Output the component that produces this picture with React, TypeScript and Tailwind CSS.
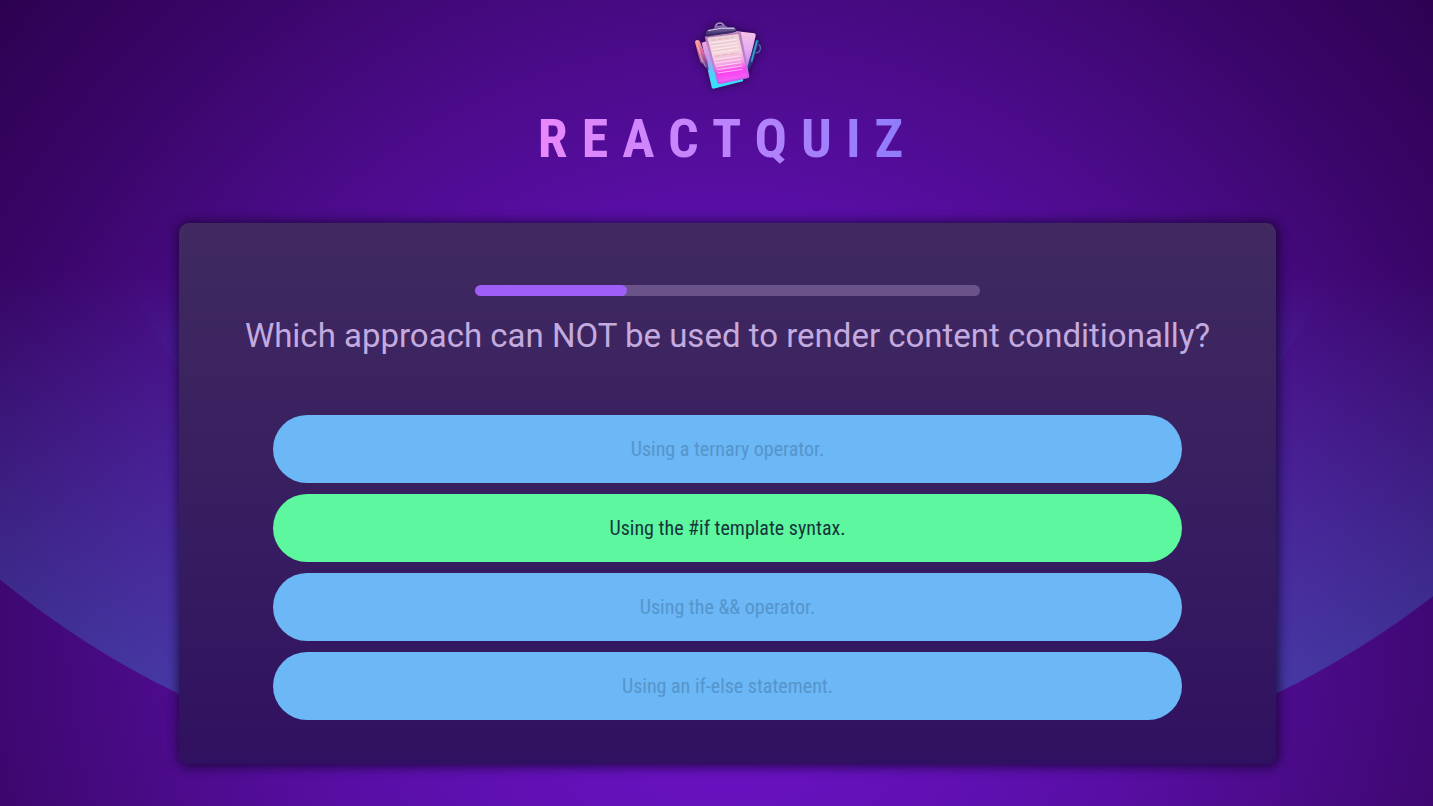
import React from "react";

type Answer = { text: string; correct?: boolean };

const QUESTION = "Which approach can NOT be used to render content conditionally?";

const ANSWERS: Answer[] = [
  { text: "Using a ternary operator." },
  { text: "Using the #if template syntax.", correct: true },
  { text: "Using the && operator." },
  { text: "Using an if-else statement." },
];

function Backdrop() {
  return (
    <svg
      aria-hidden="true"
      className="absolute inset-0 -z-10 h-full w-full"
      viewBox="0 0 1433 806"
      preserveAspectRatio="xMidYMin slice"
    >
      <defs>
        <radialGradient id="glow" gradientUnits="userSpaceOnUse" cx="0" cy="0" r="1" gradientTransform="translate(727 620) scale(960 960)">
          <stop offset="0" stopColor="#6c12cc" />
          <stop offset="0.2" stopColor="#6511bb" />
          <stop offset="0.42" stopColor="#590ea6" />
          <stop offset="0.62" stopColor="#4a0b87" />
          <stop offset="0.8" stopColor="#3a066a" />
          <stop offset="1" stopColor="#2d0150" />
        </radialGradient>
        <linearGradient id="outer" gradientUnits="userSpaceOnUse" x1="0" y1="270" x2="0" y2="828">
          <stop offset="0" stopColor="#3796d7" stopOpacity="0" />
          <stop offset="1" stopColor="#3796d7" stopOpacity="0.43" />
        </linearGradient>
        <linearGradient id="inner" gradientUnits="userSpaceOnUse" x1="0" y1="284" x2="0" y2="650">
          <stop offset="0" stopColor="#3762d7" stopOpacity="0" />
          <stop offset="1" stopColor="#3762d7" stopOpacity="0.36" />
        </linearGradient>
      </defs>
      <rect width="1433" height="806" fill="url(#glow)" />
      <path
        d="M0 270 V579.5 Q84 648 177 693 C300 752 450 752 727 752 C1004 752 1154 752 1277 693 Q1370 648 1454 579.5 V270 Z"
        fill="url(#outer)"
      />
      <circle cx="727" cy="-27" r="676" fill="url(#inner)" />
    </svg>
  );
}

function Logo() {
  return (
    <svg
      role="img"
      aria-label="Quiz logo"
      className="h-[90px] w-[95px] drop-shadow-[0_0_4px_rgba(0,0,0,0.5)]"
      viewBox="0 0 285 270"
    >
      <defs>
        <linearGradient id="sheet" x1="0" y1="0" x2="0.15" y2="1">
          <stop offset="0" stopColor="#e9cfd9" />
          <stop offset="0.45" stopColor="#f5d3dc" />
          <stop offset="0.66" stopColor="#f5a5e2" />
          <stop offset="0.84" stopColor="#fb3ff0" />
          <stop offset="1" stopColor="#f45cf5" />
        </linearGradient>
        <linearGradient id="board" x1="0" y1="0" x2="0" y2="1">
          <stop offset="0" stopColor="#b77fb4" />
          <stop offset="0.6" stopColor="#b97fd6" />
          <stop offset="1" stopColor="#d44df0" />
        </linearGradient>
        <linearGradient id="back" x1="0" y1="0" x2="0" y2="1">
          <stop offset="0" stopColor="#f5c5e6" />
          <stop offset="0.5" stopColor="#e5aaf0" />
          <stop offset="1" stopColor="#c478e8" />
        </linearGradient>
        <linearGradient id="cyan" x1="0" y1="0" x2="0" y2="1">
          <stop offset="0" stopColor="#f3a5d8" />
          <stop offset="0.4" stopColor="#b79af0" />
          <stop offset="0.68" stopColor="#4fd0f7" />
          <stop offset="1" stopColor="#35e2f8" />
        </linearGradient>
        <linearGradient id="pencil" x1="0" y1="0" x2="0" y2="1">
          <stop offset="0" stopColor="#f7a09a" />
          <stop offset="0.45" stopColor="#d4609b" />
          <stop offset="1" stopColor="#443184" />
        </linearGradient>
        <linearGradient id="clip" x1="0" y1="0" x2="0" y2="1">
          <stop offset="0" stopColor="#8a76b3" />
          <stop offset="1" stopColor="#2b1f58" />
        </linearGradient>
      </defs>
      <path d="M158 62 L223 70 Q228 71 227 77 L203 178 L150 170 Z" fill="url(#back)" />
      <path d="M65 98 L84 92 L190 200 L189 214 L100 236 Q96 236 95 232 Z" fill="url(#cyan)" />
      <path d="M76 78 L178 66 Q182 66 183 70 L208 199 Q208 204 203 205 L119 222 Q113 222 112 217 L75 84 Z" fill="url(#board)" />
      <path d="M82 83 L175 72 L202 195 Q202 199 198 200 L121 217 Q117 217 116 213 Z" fill="url(#sheet)" />
      <g fill="none" stroke="#ffffff" strokeOpacity="0.6" strokeWidth="3">
        <path d="M90 99 L170 88 M93 109 L172 98 M96 119 L174 108 M98 129 L176 118" />
        <path d="M103 149 L180 138 M106 159 L182 148 M109 169 L184 158 M112 179 L186 168 M114 189 L188 178" />
      </g>
      <g fill="none" stroke="#d99b91" strokeOpacity="0.5" strokeWidth="3">
        <path d="M94 91 L160 82" strokeDasharray="14 6" />
        <path d="M104 139 L172 129" strokeDasharray="18 4" />
        <path d="M94 104 L168 94 M98 124 L172 113" strokeWidth="1" />
        <path d="M106 154 L180 143 M110 174 L184 163" strokeWidth="1" />
      </g>
      <path d="M106 55 Q106 40 119 39 Q131 39 133 52" fill="none" stroke="#a48bc2" strokeWidth="5" />
      <path d="M78 68 Q80 59 92 57 L100 56 Q103 48 113 47 L130 46 Q138 46 143 52 L158 51 Q166 52 168 60 L169 66 L79 80 Z" fill="url(#clip)" />
      <path d="M84 62 Q125 51 164 55" fill="none" stroke="#d8c8e6" strokeWidth="3" />
      <path d="M78 76 L169 63" fill="none" stroke="#3a2b66" strokeWidth="4" />
      <path d="M45 97 Q45 91 51 90 Q58 89 60 95 L82 153 L86 181 L68 162 Q60 159 59 151 Z" fill="url(#pencil)" />
      <path d="M49 94 L67 154" fill="none" stroke="#f5a9a4" strokeWidth="4" strokeLinecap="round" />
      <path d="M61 132 L73 162 L78 172" fill="none" stroke="#a58bc8" strokeWidth="3" />
      <path d="M226 93 Q231 85 237 91 L236 102 L218 158 L206 179 L202 171 L209 146 Z" fill="#283a88" />
      <path d="M231 93 L215 153" fill="none" stroke="#3b9fcb" strokeWidth="5" strokeLinecap="round" />
      <path d="M236 104 Q244 109 240 120 Q236 130 227 128" fill="none" stroke="#5067b8" strokeWidth="4" />
    </svg>
  );
}

function ProgressBar({ percent }: { percent: number }) {
  return (
    <div
      role="progressbar"
      aria-label="Time remaining"
      aria-valuenow={percent}
      aria-valuemin={0}
      aria-valuemax={100}
      className="h-[11px] w-1/2 overflow-hidden rounded-full bg-[#6a5389]"
    >
      <div className="h-full rounded-full bg-[#9f5ef8]" style={{ width: `${percent}%` }} />
    </div>
  );
}

function AnswerButton({ text, correct }: Answer) {
  return (
    <button
      type="button"
      className={
        "h-[68px] w-full rounded-full font-['Roboto_Condensed','Liberation_Sans_Narrow',sans-serif] text-[20px] leading-7 " +
        (correct ? "bg-[#5cf79e] text-[#17363c]" : "bg-[#6cb7f5] text-[#5595cb]")
      }
    >
      {text}
    </button>
  );
}

export default function App() {
  return (
    <div className="relative isolate flex min-h-screen flex-col items-center overflow-hidden bg-[#3a066a] pl-[22px] font-['Roboto',sans-serif]">
      <Backdrop />
      <header className="flex flex-col items-center pt-[10px]">
        <Logo />
        <h1 className="bg-linear-to-r from-[#ea88fb] to-[#8b7bfb] bg-clip-text font-['Roboto_Condensed','Liberation_Sans_Narrow',sans-serif] text-[54px] leading-[78px] font-bold tracking-[14px] text-transparent">
          REACTQUIZ
        </h1>
      </header>
      <main className="mt-[45px] flex w-[calc(100%-314px)] flex-col items-center rounded-[10px] bg-linear-to-b from-[#402a60] to-[#301060] px-[44px] pt-[62px] pb-[44px] shadow-[1px_1px_11px_2px_rgba(12,5,32,0.7)]">
        <ProgressBar percent={30} />
        <h2 className="mt-[17px] text-center text-[33px] leading-[46px] font-normal text-[#c3aadf]">
          {QUESTION}
        </h2>
        <ul className="mt-[56px] flex w-[90%] flex-col gap-[11px]">
          {ANSWERS.map((answer) => (
            <li key={answer.text}>
              <AnswerButton {...answer} />
            </li>
          ))}
        </ul>
      </main>
    </div>
  );
}
